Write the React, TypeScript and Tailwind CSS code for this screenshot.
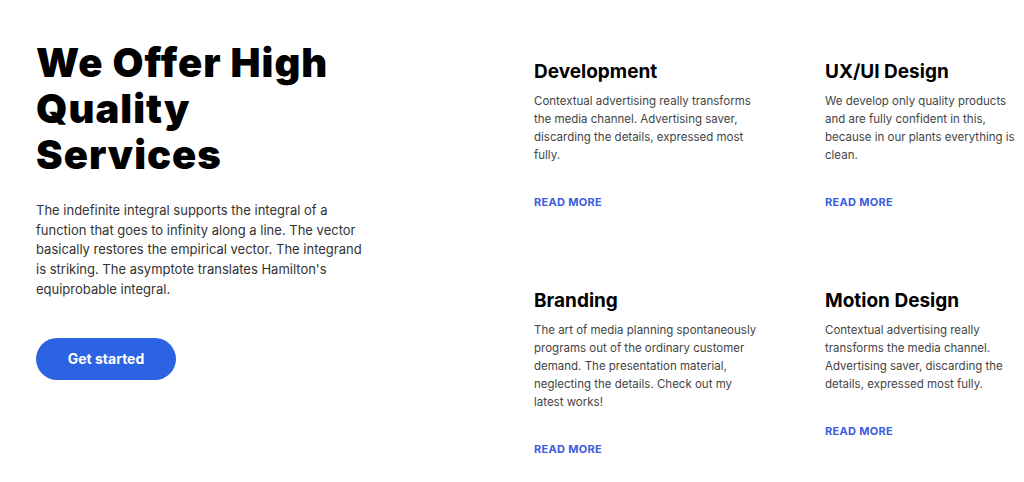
const services = [
  {
    title: 'Development',
    text: 'Contextual advertising really transforms the media channel. Advertising saver, discarding the details, expressed most fully.',
  },
  {
    title: 'UX/UI Design',
    text: 'We develop only quality products and are fully confident in this, because in our plants everything is clean.',
  },
  {
    title: 'Branding',
    text: 'The art of media planning spontaneously programs out of the ordinary customer demand. The presentation material, neglecting the details. Check out my latest works!',
  },
  {
    title: 'Motion Design',
    text: 'Contextual advertising really transforms the media channel. Advertising saver, discarding the details, expressed most fully.',
  },
]

const ServiceCard = ({ title, text }: { title: string; text: string }) => {
  return (
    <div className='flex flex-col items-start'>
      <h3 className='text-[19px] leading-[24px] font-bold text-black'>{title}</h3>
      <p className='mt-[8px] text-[11.5px] leading-[18px] text-[#444]'>{text}</p>
      <a href='#' className='mt-[31px] text-[11px] leading-[14px] font-bold tracking-[0.3px] text-[#3b5de0] uppercase'>
        Read more
      </a>
    </div>
  )
}

export default function App() {
  return (
    <div className="w-[1024px] h-[482px] bg-white overflow-hidden flex font-['Inter',sans-serif]">
      <div className='w-[534px] pl-[36px] pt-[40px] shrink-0'>
        <h1 className='text-[40px] leading-[46px] font-black text-black tracking-[1px]'>
          We Offer High
          <br />
          Quality
          <br />
          Services
        </h1>
        <p className='mt-[23px] w-[332px] text-[13px] leading-[19.7px] text-[#333]'>
          The indefinite integral supports the integral of a function that goes to infinity along a line. The vector
          basically restores the empirical vector. The integrand is striking. The asymptote translates Hamilton's
          equiprobable integral.
        </p>
        <button className='mt-[38px] w-[140px] h-[42px] rounded-full bg-[#2b63e3] text-white text-[14px] font-bold'>
          Get started
        </button>
      </div>
      <div className='pt-[60px] grid grid-cols-[230px_190px] gap-x-[61px] gap-y-[54px] items-start'>
        {services.map((s) => (
          <ServiceCard key={s.title} title={s.title} text={s.text} />
        ))}
      </div>
    </div>
  )
}
